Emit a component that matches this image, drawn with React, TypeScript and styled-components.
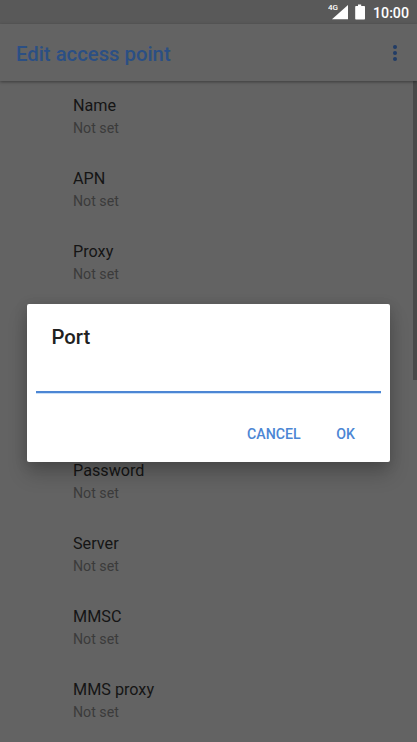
import React from 'react';
import styled, { createGlobalStyle } from 'styled-components';

const GlobalStyle = createGlobalStyle`
  *, *::before, *::after { box-sizing: border-box; }
  body { margin: 0; overflow: hidden; background: #636363; }
  button { font: inherit; border: 0; background: none; padding: 0; }
`;

const Screen = styled.div`
  position: relative;
  display: flex;
  flex-direction: column;
  width: 417px;
  height: 742px;
  overflow: hidden;
  background: #636363;
  font-family: Roboto, sans-serif;
`;

const StatusBar = styled.div`
  flex: none;
  display: flex;
  justify-content: flex-end;
  align-items: center;
  height: 24px;
  padding-right: 8px;
  background: #595959;
  color: #fff;
`;

const StatusIcons = styled.svg`
  display: block;
  width: 45px;
  height: 24px;
`;

const Network = styled.text`
  font: 500 8px Roboto, sans-serif;
  fill: #fff;
`;

const Clock = styled.span`
  font-size: 14.2px;
  font-weight: 500;
  line-height: 24px;
  padding-top: 2px;
`;

const AppBar = styled.header`
  flex: none;
  z-index: 1;
  display: flex;
  align-items: center;
  justify-content: space-between;
  height: 57px;
  padding: 2px 20px 0 16px;
  background: #636363;
  box-shadow: 0 1px 3px rgba(0, 0, 0, 0.4);
`;

const Title = styled.h1`
  margin: 0;
  font-size: 20.3px;
  font-weight: 500;
  line-height: 28px;
  color: #2b4f84;
`;

const MoreButton = styled.button`
  display: flex;
  flex-direction: column;
  gap: 2px;
  margin-bottom: 2px;
`;

const Dot = styled.span`
  width: 4px;
  height: 4px;
  border-radius: 50%;
  background: #213c66;
`;

const Content = styled.main`
  flex: 1;
  display: flex;
  justify-content: space-between;
  min-height: 0;
`;

const List = styled.ul`
  margin: 0;
  padding: 0 0 0 73px;
  list-style: none;
`;

const Row = styled.li<{ $skipped?: number }>`
  height: 73px;
  margin-top: ${({ $skipped = 0 }) => $skipped * 73}px;
  padding-top: 13px;
`;

const Label = styled.div`
  font-size: 16.2px;
  line-height: 23px;
  color: #151515;
`;

const Value = styled.div`
  font-size: 14.2px;
  line-height: 22px;
  color: #3b3b3b;
`;

const ScrollThumb = styled.div`
  width: 4px;
  height: 299px;
  background: #494949;
`;

const Dialog = styled.section`
  position: absolute;
  z-index: 2;
  left: 27px;
  top: 304px;
  display: flex;
  flex-direction: column;
  width: 363px;
  height: 158px;
  padding: 19px 9px 0;
  border-radius: 2px;
  background: #fff;
  box-shadow: 0 12px 20px rgba(0, 0, 0, 0.2), 0 2px 14px rgba(0, 0, 0, 0.14);
`;

const DialogTitle = styled.h2`
  margin: 0 0 0 15.5px;
  font-size: 20.3px;
  font-weight: 500;
  line-height: 28px;
  color: #212121;
`;

const Field = styled.div`
  height: 42px;
  border-bottom: 2px solid #4c86d4;
  box-shadow: 0 1px 0 #c9e0f8;
`;

const Actions = styled.div`
  display: flex;
  justify-content: flex-end;
  gap: 35.500px;
  padding: 29px 26px 0 0;
`;

const Action = styled.button`
  font-size: 14.2px;
  font-weight: 500;
  line-height: 24px;
  color: #4c86d4;
`;

const fields = [
  { name: 'Name' },
  { name: 'APN' },
  { name: 'Proxy' },
  { name: 'Password', skipped: 2 },
  { name: 'Server' },
  { name: 'MMSC' },
  { name: 'MMS proxy' },
];

export default function App() {
  return (
    <>
      <GlobalStyle />
      <Screen>
        <StatusBar>
          <StatusIcons viewBox="0 0 45 24">
            <Network x="0" y="10">4G</Network>
            <path d="M20 5v14.2H4z" fill="#fff" />
            <path d="M30 4.500h3.200v1.600H36c.6 0 1 .4 1 1v11.400c0 .6-.4 1-1 1h-7.800c-.6 0-1-.4-1-1V7.100c0-.6.4-1 1-1H30z" fill="#fff" />
          </StatusIcons>
          <Clock>10:00</Clock>
        </StatusBar>
        <AppBar>
          <Title>Edit access point</Title>
          <MoreButton aria-label="More options">
            <Dot /><Dot /><Dot />
          </MoreButton>
        </AppBar>
        <Content>
          <List>
            {fields.map(({ name, skipped }) => (
              <Row key={name} $skipped={skipped}>
                <Label>{name}</Label>
                <Value>Not set</Value>
              </Row>
            ))}
          </List>
          <ScrollThumb />
        </Content>
        <Dialog role="dialog" aria-label="Port">
          <DialogTitle>Port</DialogTitle>
          <Field />
          <Actions>
            <Action>CANCEL</Action>
            <Action>OK</Action>
          </Actions>
        </Dialog>
      </Screen>
    </>
  );
}
